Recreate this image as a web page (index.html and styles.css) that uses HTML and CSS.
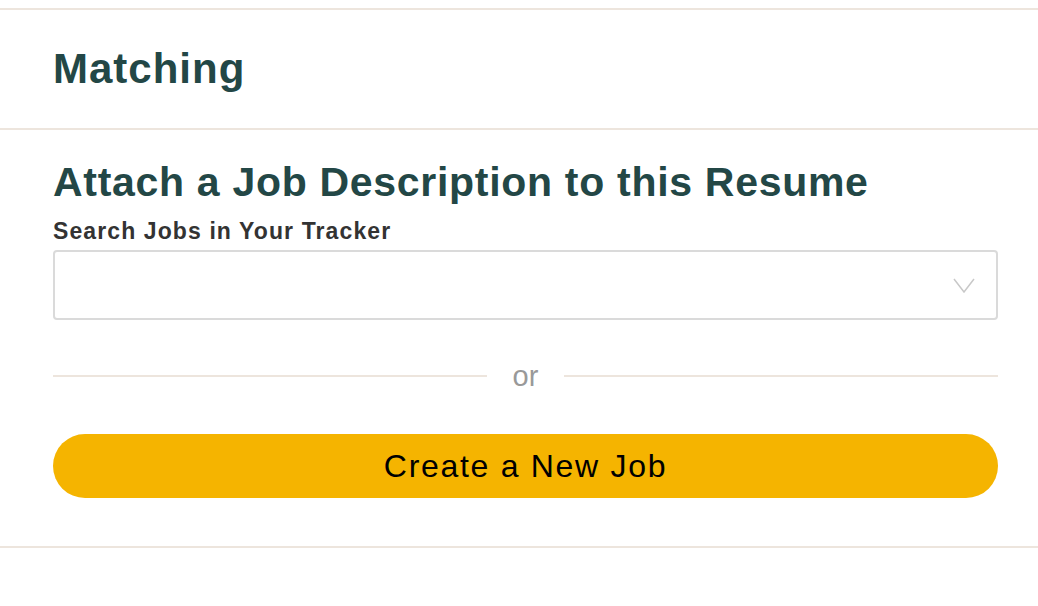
FILE: index.html
```html
<!DOCTYPE html>
<html>
<head>
  <title>Matching</title>
  <link rel="stylesheet" href="styles.css">
</head>
<body>

  <div class="panel">
    <div class="panel-head">
      <h2>Matching</h2>
    </div>

    <div class="panel-body">
      <h3>Attach a Job Description to this Resume</h3>
      <label class="field-label" for="jobSearch">Search Jobs in Your Tracker</label>
      <div class="select-box" id="jobSearch">
        <svg class="chevron" width="22" height="15" viewBox="0 0 22 15">
          <path d="M1 1 L11 14 L21 1" fill="none" stroke="#c8c8c8" stroke-width="1.5"/>
        </svg>
      </div>

      <div class="divider">
        <span class="divider-line"></span>
        <span class="divider-text">or</span>
        <span class="divider-line"></span>
      </div>

      <button class="btn-create">Create a New Job</button>
    </div>
  </div>

</body>
</html>
```

FILE: styles.css
```css
body {
  margin: 0;
  padding-top: 8px;
  background: #fff;
  font-family: 'Liberation Sans', Arial, sans-serif;
}

.panel {
  border-top: 2px solid #ede5dd;
  border-bottom: 2px solid #ede5dd;
}

.panel-head {
  height: 118px;
  display: flex;
  align-items: center;
  padding: 0 40px 0 53px;
  border-bottom: 2px solid #ede5dd;
}

.panel-head h2 {
  margin: 0;
  font-size: 42px;
  font-weight: 700;
  letter-spacing: 1px;
  color: #234746;
}

.panel-body {
  padding: 26px 40px 48px 53px;
}

.panel-body h3 {
  margin: 0;
  font-size: 41px;
  font-weight: 700;
  line-height: 52px;
  letter-spacing: 0.7px;
  color: #234746;
}

.field-label {
  display: block;
  margin-top: 6px;
  font-size: 23px;
  font-weight: 700;
  line-height: 34px;
  letter-spacing: 1.1px;
  color: #333;
}

.select-box {
  height: 66px;
  margin-top: 2px;
  border: 2px solid #dadada;
  border-radius: 4px;
  display: flex;
  align-items: center;
  justify-content: flex-end;
  padding-right: 21px;
}

.divider {
  display: flex;
  align-items: center;
  gap: 26px;
  margin-top: 30px;
}

.divider-line {
  flex: 1;
  height: 2px;
  background: #ede5dd;
}

.divider-text {
  font-size: 29px;
  color: #999;
  line-height: 52px;
}

.btn-create {
  display: block;
  width: 100%;
  height: 64px;
  margin-top: 32px;
  border: none;
  border-radius: 32px;
  background: #f5b400;
  color: #000;
  font-family: inherit;
  font-size: 32px;
  letter-spacing: 1.7px;
  cursor: pointer;
}
```
